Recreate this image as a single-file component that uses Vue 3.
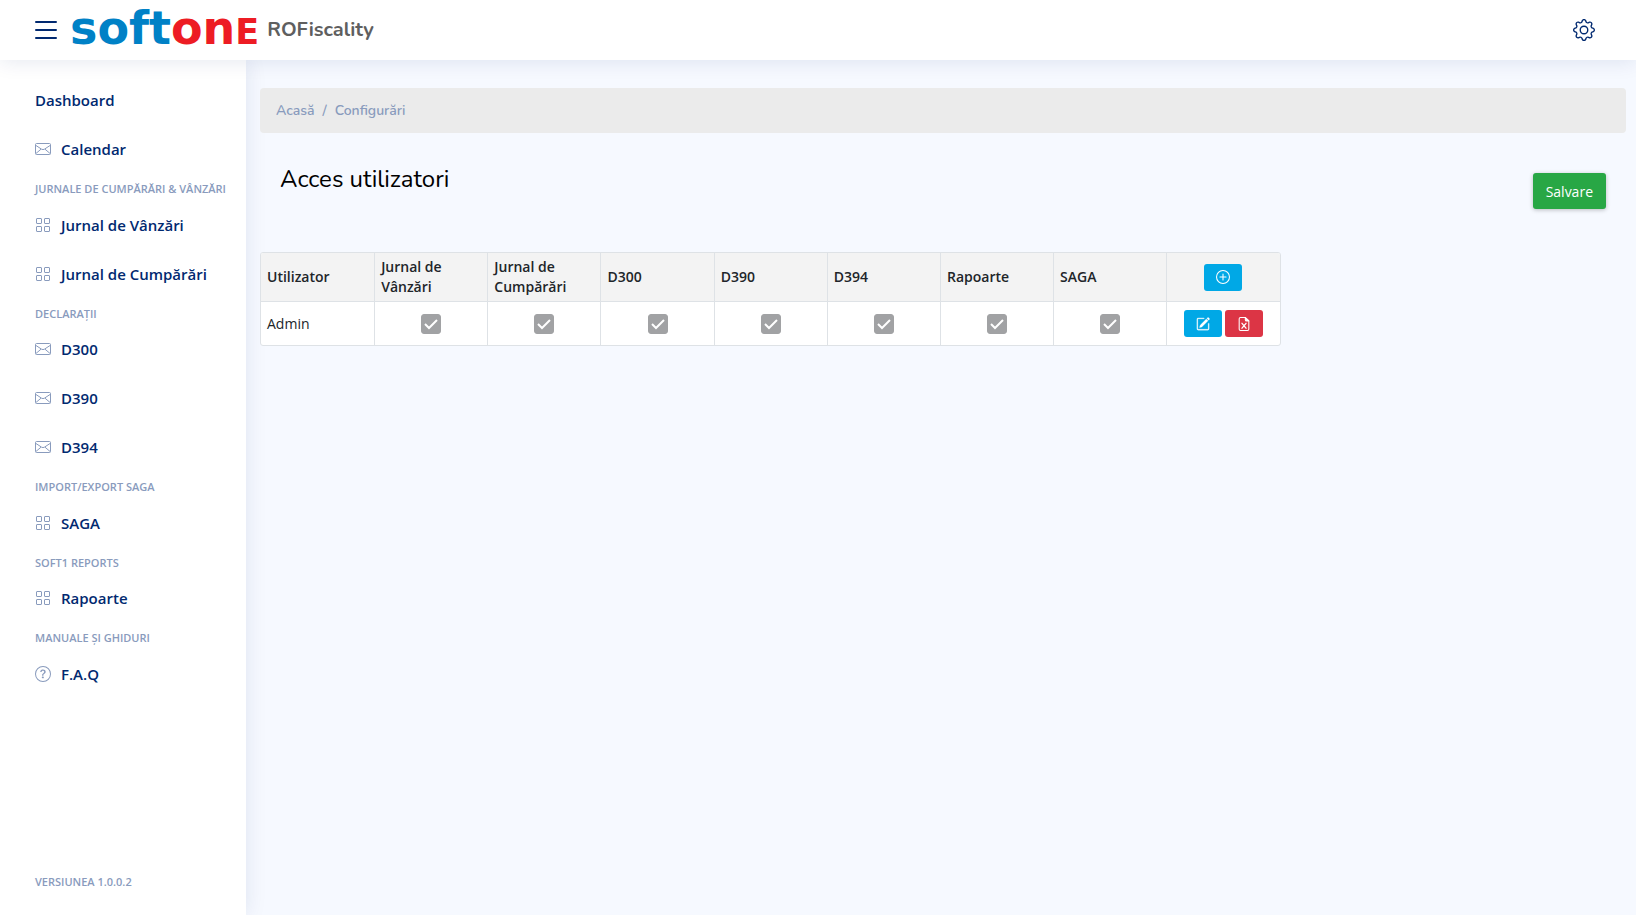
<script setup>
import { ref } from 'vue'

let sidebarOpen = ref(true)

let menu = [
  { id: 1, type: 'link', label: 'Dashboard' },
  { id: 2, type: 'link', label: 'Calendar', icon: 'envelope' },
  { id: 3, type: 'heading', label: 'Jurnale de cumpărări & vânzări' },
  { id: 4, type: 'link', label: 'Jurnal de Vânzări', icon: 'grid' },
  { id: 5, type: 'link', label: 'Jurnal de Cumpărări', icon: 'grid' },
  { id: 6, type: 'heading', label: 'Declarații' },
  { id: 7, type: 'link', label: 'D300', icon: 'envelope' },
  { id: 8, type: 'link', label: 'D390', icon: 'envelope' },
  { id: 9, type: 'link', label: 'D394', icon: 'envelope' },
  { id: 10, type: 'heading', label: 'Import/Export SAGA' },
  { id: 11, type: 'link', label: 'SAGA', icon: 'grid' },
  { id: 12, type: 'heading', label: 'Soft1 Reports' },
  { id: 13, type: 'link', label: 'Rapoarte', icon: 'grid' },
  { id: 14, type: 'heading', label: 'Manuale și ghiduri' },
  { id: 15, type: 'link', label: 'F.A.Q', icon: 'question' }
]

let columns = [
  { key: 'jv', label: 'Jurnal de Vânzări' },
  { key: 'jc', label: 'Jurnal de Cumpărări' },
  { key: 'd300', label: 'D300' },
  { key: 'd390', label: 'D390' },
  { key: 'd394', label: 'D394' },
  { key: 'rapoarte', label: 'Rapoarte' },
  { key: 'saga', label: 'SAGA' }
]

let users = ref([createUser(1, 'Admin', true)])

//---------------------functions---------------------//

function createUser(id, name, access) {
  let user = { id, name, editing: false }
  columns.forEach((column) => {
    user[column.key] = access
  })
  return user
}

function addUser() {
  users.value.push(createUser(Date.now(), 'Utilizator', false))
}

function deleteUser(id) {
  users.value = users.value.filter((user) => user.id !== id)
}
</script>

<template>
  <div class="page">
    <header class="header">
      <button class="icon-btn" type="button" aria-label="Meniu" @click="sidebarOpen = !sidebarOpen">
        <svg width="32" height="32" viewBox="0 0 16 16" fill="none" stroke="currentColor" stroke-linecap="round">
          <path d="M3 4h10M3 8h10M3 12h10" />
        </svg>
      </button>
      <a class="brand" href="#">
        <span class="logo"><span class="soft">soft</span><span class="one">on<span class="cap">E</span></span></span>
        <span class="product">ROFiscality</span>
      </a>
      <button class="icon-btn settings" type="button" aria-label="Setări">
        <svg width="22" height="22" viewBox="0 0 16 16" fill="currentColor">
          <path d="M8 4.754a3.246 3.246 0 1 0 0 6.492 3.246 3.246 0 0 0 0-6.492zM5.754 8a2.246 2.246 0 1 1 4.492 0 2.246 2.246 0 0 1-4.492 0z" />
          <path d="M9.796 1.343c-.527-1.79-3.065-1.79-3.592 0l-.094.319a.873.873 0 0 1-1.255.52l-.292-.16c-1.64-.892-3.433.902-2.54 2.541l.159.292a.873.873 0 0 1-.52 1.255l-.319.094c-1.79.527-1.79 3.065 0 3.592l.319.094a.873.873 0 0 1 .52 1.255l-.16.292c-.892 1.64.901 3.434 2.541 2.54l.292-.159a.873.873 0 0 1 1.255.52l.094.319c.527 1.79 3.065 1.79 3.592 0l.094-.319a.873.873 0 0 1 1.255-.52l.292.16c1.64.893 3.434-.902 2.54-2.541l-.159-.292a.873.873 0 0 1 .52-1.255l.319-.094c1.79-.527 1.79-3.065 0-3.592l-.319-.094a.873.873 0 0 1-.52-1.255l.16-.292c.893-1.64-.902-3.433-2.541-2.54l-.292.159a.873.873 0 0 1-1.255-.52l-.094-.319zm-2.633.283c.246-.835 1.428-.835 1.674 0l.094.319a1.873 1.873 0 0 0 2.693 1.115l.291-.16c.764-.415 1.6.42 1.184 1.185l-.159.292a1.873 1.873 0 0 0 1.116 2.692l.318.094c.835.246.835 1.428 0 1.674l-.319.094a1.873 1.873 0 0 0-1.115 2.693l.16.291c.415.764-.42 1.6-1.185 1.184l-.291-.159a1.873 1.873 0 0 0-2.693 1.116l-.094.318c-.246.835-1.428.835-1.674 0l-.094-.319a1.873 1.873 0 0 0-2.692-1.115l-.292.16c-.764.415-1.6-.42-1.184-1.185l.159-.291A1.873 1.873 0 0 0 1.945 8.93l-.319-.094c-.835-.246-.835-1.428 0-1.674l.319-.094A1.873 1.873 0 0 0 3.06 4.377l-.16-.292c-.415-.764.42-1.6 1.185-1.184l.292.159a1.873 1.873 0 0 0 2.692-1.115l.094-.319z" />
        </svg>
      </button>
    </header>

    <div class="body">
      <aside v-show="sidebarOpen" class="sidebar">
        <nav>
          <ul class="menu">
            <li v-for="item in menu" :key="item.id" :class="item.type">
              <template v-if="item.type === 'heading'">{{ item.label }}</template>
              <a v-else href="#">
                <svg v-if="item.icon === 'envelope'" width="16" height="16" viewBox="0 0 16 16" fill="none" stroke="currentColor">
                  <rect x="0.5" y="2.5" width="15" height="11" rx="1" />
                  <path d="M0.5 4.2 6.6 8.2Q8 9 9.4 8.2L15.5 4.2M0.8 12.6 6 8.2M15.2 12.6 10 8.2" />
                </svg>
                <svg v-if="item.icon === 'grid'" width="16" height="16" viewBox="0 0 16 16" fill="none" stroke="currentColor">
                  <rect x="1.5" y="1.5" width="5" height="5" rx="0.5" />
                  <rect x="9.5" y="1.5" width="5" height="5" rx="0.5" />
                  <rect x="1.5" y="9.5" width="5" height="5" rx="0.5" />
                  <rect x="9.5" y="9.5" width="5" height="5" rx="0.5" />
                </svg>
                <svg v-if="item.icon === 'question'" width="16" height="16" viewBox="0 0 16 16" fill="currentColor">
                  <path d="M8 15A7 7 0 1 1 8 1a7 7 0 0 1 0 14zm0 1A8 8 0 1 0 8 0a8 8 0 0 0 0 16z" />
                  <path d="M5.255 5.786a.237.237 0 0 0 .241.247h.825c.138 0 .248-.113.266-.25.09-.656.54-1.134 1.342-1.134.686 0 1.314.343 1.314 1.168 0 .635-.374.927-.965 1.371-.673.489-1.206 1.06-1.168 1.987l.003.217a.25.25 0 0 0 .25.246h.811a.25.25 0 0 0 .25-.25v-.105c0-.718.273-.927 1.01-1.486.609-.463 1.244-.977 1.244-2.056 0-1.511-1.276-2.241-2.673-2.241-1.267 0-2.655.59-2.75 2.286zm1.557 5.763c0 .533.425.927 1.01.927.609 0 1.028-.394 1.028-.927 0-.552-.42-.94-1.029-.94-.584 0-1.009.388-1.009.94z" />
                </svg>
                <span>{{ item.label }}</span>
              </a>
            </li>
          </ul>
        </nav>
        <p class="version">Versiunea 1.0.0.2</p>
      </aside>

      <main class="main">
        <nav class="breadcrumb" aria-label="breadcrumb">
          <a href="#">Acasă</a>
          <span>/</span>
          <a href="#">Configurări</a>
        </nav>

        <div class="toolbar">
          <h1>Acces utilizatori</h1>
          <button class="save-btn" type="button">Salvare</button>
        </div>

        <table class="grid">
          <thead>
            <tr>
              <th>Utilizator</th>
              <th v-for="column in columns" :key="column.key">{{ column.label }}</th>
              <th class="center">
                <button class="btn info" type="button" aria-label="Adaugă" @click="addUser">
                  <svg width="14" height="14" viewBox="0 0 16 16" fill="none" stroke="currentColor" stroke-width="1.2" stroke-linecap="round">
                    <circle cx="8" cy="8" r="7.4" />
                    <path d="M8 4.5v7M4.5 8h7" />
                  </svg>
                </button>
              </th>
            </tr>
          </thead>
          <tbody>
            <tr v-for="user in users" :key="user.id">
              <td>{{ user.name }}</td>
              <td v-for="column in columns" :key="column.key" class="center">
                <input
                  v-model="user[column.key]"
                  type="checkbox"
                  :disabled="!user.editing"
                  :aria-label="column.label"
                />
              </td>
              <td class="center">
                <div class="actions">
                  <button class="btn info" type="button" aria-label="Editează" @click="user.editing = !user.editing">
                    <svg width="14" height="14" viewBox="0 0 16 16" fill="currentColor" stroke="currentColor" stroke-width="0.3">
                      <path d="M15.502 1.94a.5.5 0 0 1 0 .706L14.459 3.69l-2-2L13.502.646a.5.5 0 0 1 .707 0l1.293 1.293zm-1.75 2.456-2-2L4.939 9.21a.5.5 0 0 0-.121.196l-.805 2.414a.25.25 0 0 0 .316.316l2.414-.805a.5.5 0 0 0 .196-.12l6.813-6.814z" />
                      <path d="M1 13.5A1.5 1.5 0 0 0 2.5 15h11a1.5 1.5 0 0 0 1.5-1.5v-6a.5.5 0 0 0-1 0v6a.5.5 0 0 1-.5.5h-11a.5.5 0 0 1-.5-.5v-11a.5.5 0 0 1 .5-.5H9a.5.5 0 0 0 0-1H2.5A1.5 1.5 0 0 0 1 2.5v11z" />
                    </svg>
                  </button>
                  <button class="btn danger" type="button" aria-label="Șterge" @click="deleteUser(user.id)">
                    <svg width="14" height="14" viewBox="0 0 16 16" fill="none" stroke="currentColor" stroke-width="1.2" stroke-linecap="round" stroke-linejoin="round">
                      <path d="M9.5.6H4A1.5 1.5 0 0 0 2.5 2v12A1.5 1.5 0 0 0 4 15.4h8a1.5 1.5 0 0 0 1.5-1.4V4.5z" />
                      <path d="M9.5.6V3A1.5 1.5 0 0 0 11 4.5h2.5z" fill="currentColor" />
                      <path d="M5.7 7.2l4.6 5.6M10.3 7.2l-4.6 5.6" stroke-width="1.5" />
                    </svg>
                  </button>
                </div>
              </td>
            </tr>
          </tbody>
        </table>
      </main>
    </div>
  </div>
</template>

<style>
body {
  background: #f6f9ff;
}
</style>

<style scoped>
.page {
  min-height: 100vh;
  display: flex;
  flex-direction: column;
  font-family: 'Open Sans', 'Noto Sans', sans-serif;
  font-size: 14px;
  line-height: 1.5;
  color: #212529;
}
.page * {
  box-sizing: border-box;
}
a {
  text-decoration: none;
}
button {
  border: none;
  padding: 0;
  cursor: pointer;
  font-family: inherit;
}
svg {
  display: block;
  flex-shrink: 0;
}

.header {
  position: sticky;
  top: 0;
  z-index: 2;
  height: 60px;
  padding: 0 41px 0 30px;
  display: flex;
  align-items: center;
  gap: 8px;
  background: #fff;
  box-shadow: 0 2px 20px rgba(1, 41, 112, 0.1);
}
.icon-btn {
  background: none;
  color: #012970;
}
.settings {
  margin-left: auto;
}
.brand {
  display: flex;
  align-items: center;
  gap: 8px;
}
.logo {
  min-width: 188px;
  font-family: 'DejaVu Sans', sans-serif;
  font-weight: bold;
  font-size: 46px;
  line-height: 50px;
}
.soft {
  color: #0081c6;
}
.one {
  color: #ed1c24;
}
.cap {
  font-size: 35px;
}
.product {
  font-family: Nunito, 'Open Sans', sans-serif;
  font-size: 20px;
  font-weight: 700;
  line-height: 24px;
  color: #5f5f5f;
}

.body {
  flex: 1;
  display: flex;
}
.sidebar {
  flex: 0 0 246px;
  padding: 18px 20px 25px;
  display: flex;
  flex-direction: column;
  background: #fff;
  box-shadow: 0 0 20px rgba(1, 41, 112, 0.1);
}
.menu {
  margin: 0;
  padding: 0;
  list-style: none;
}
.link {
  margin-bottom: 5px;
}
.link a {
  display: flex;
  align-items: center;
  gap: 10px;
  padding: 10px 15px;
  font-size: 15px;
  font-weight: 600;
  line-height: 24px;
  color: #012970;
}
.link svg {
  color: #899bbd;
}
.heading,
.version {
  font-size: 11px;
  font-weight: 600;
  text-transform: uppercase;
  white-space: nowrap;
  color: #899bbd;
}
.heading {
  margin: 10px 0 5px 15px;
}
.version {
  margin: auto 0 0 15px;
}

.main {
  flex: 1;
  min-width: 0;
  padding: 28px 10px 28px 14px;
}
.breadcrumb {
  display: flex;
  gap: 8px;
  padding: 12px 16px;
  border-radius: 4px;
  background: #ebebeb;
  font-family: Nunito, 'Open Sans', sans-serif;
  font-weight: 600;
  color: #899bbd;
}
.breadcrumb a {
  color: inherit;
}
.toolbar {
  display: flex;
  justify-content: space-between;
  align-items: flex-start;
  padding: 28px 20px 43px;
}
h1 {
  margin: 0;
  font-family: Nunito, 'Open Sans', sans-serif;
  font-size: 24px;
  font-weight: 400;
  line-height: 36px;
  color: #000;
}
.save-btn {
  margin-top: 12px;
  height: 36px;
  padding: 0 13px;
  border-radius: 3px;
  background: #28a745;
  box-shadow: 0 1px 4px rgba(0, 0, 0, 0.25);
  font-size: 14px;
  color: #fff;
}

.grid {
  width: calc(75% - 4px);
  table-layout: fixed;
  border-collapse: separate;
  border-spacing: 0;
  border: 1px solid #dee2e6;
  border-radius: 3px;
  overflow: hidden;
  background: #fff;
}
th,
td {
  padding: 4px 6px;
  text-align: left;
  vertical-align: middle;
  line-height: 20px;
}
th + th,
td + td {
  border-left: 1px solid #dee2e6;
}
th {
  height: 49px;
  border-bottom: 1px solid #dee2e6;
  background: #f3f3f3;
  font-weight: 600;
}
td {
  height: 43px;
}
tr + tr td {
  border-top: 1px solid #dee2e6;
}
th.center,
td.center {
  text-align: center;
}
input[type='checkbox'] {
  appearance: none;
  display: block;
  width: 20px;
  height: 20px;
  margin: 0 auto;
  border: 1px solid #a1a2a4;
  border-radius: 3px;
  background: #fff;
}
input[type='checkbox']:checked {
  background: #a1a2a4 url("data:image/svg+xml,%3Csvg xmlns='http://www.w3.org/2000/svg' viewBox='0 0 18 18'%3E%3Cpath d='M3 9l4 4 8-8' fill='none' stroke='white' stroke-width='2'/%3E%3C/svg%3E") center / 18px no-repeat;
}
.actions {
  display: flex;
  justify-content: center;
  gap: 3px;
}
.btn {
  display: inline-flex;
  align-items: center;
  justify-content: center;
  width: 38px;
  height: 27px;
  border-radius: 3px;
  color: #fff;
  vertical-align: middle;
}
.info {
  background: #00a8e6;
}
.danger {
  background: #dc3545;
}
</style>
